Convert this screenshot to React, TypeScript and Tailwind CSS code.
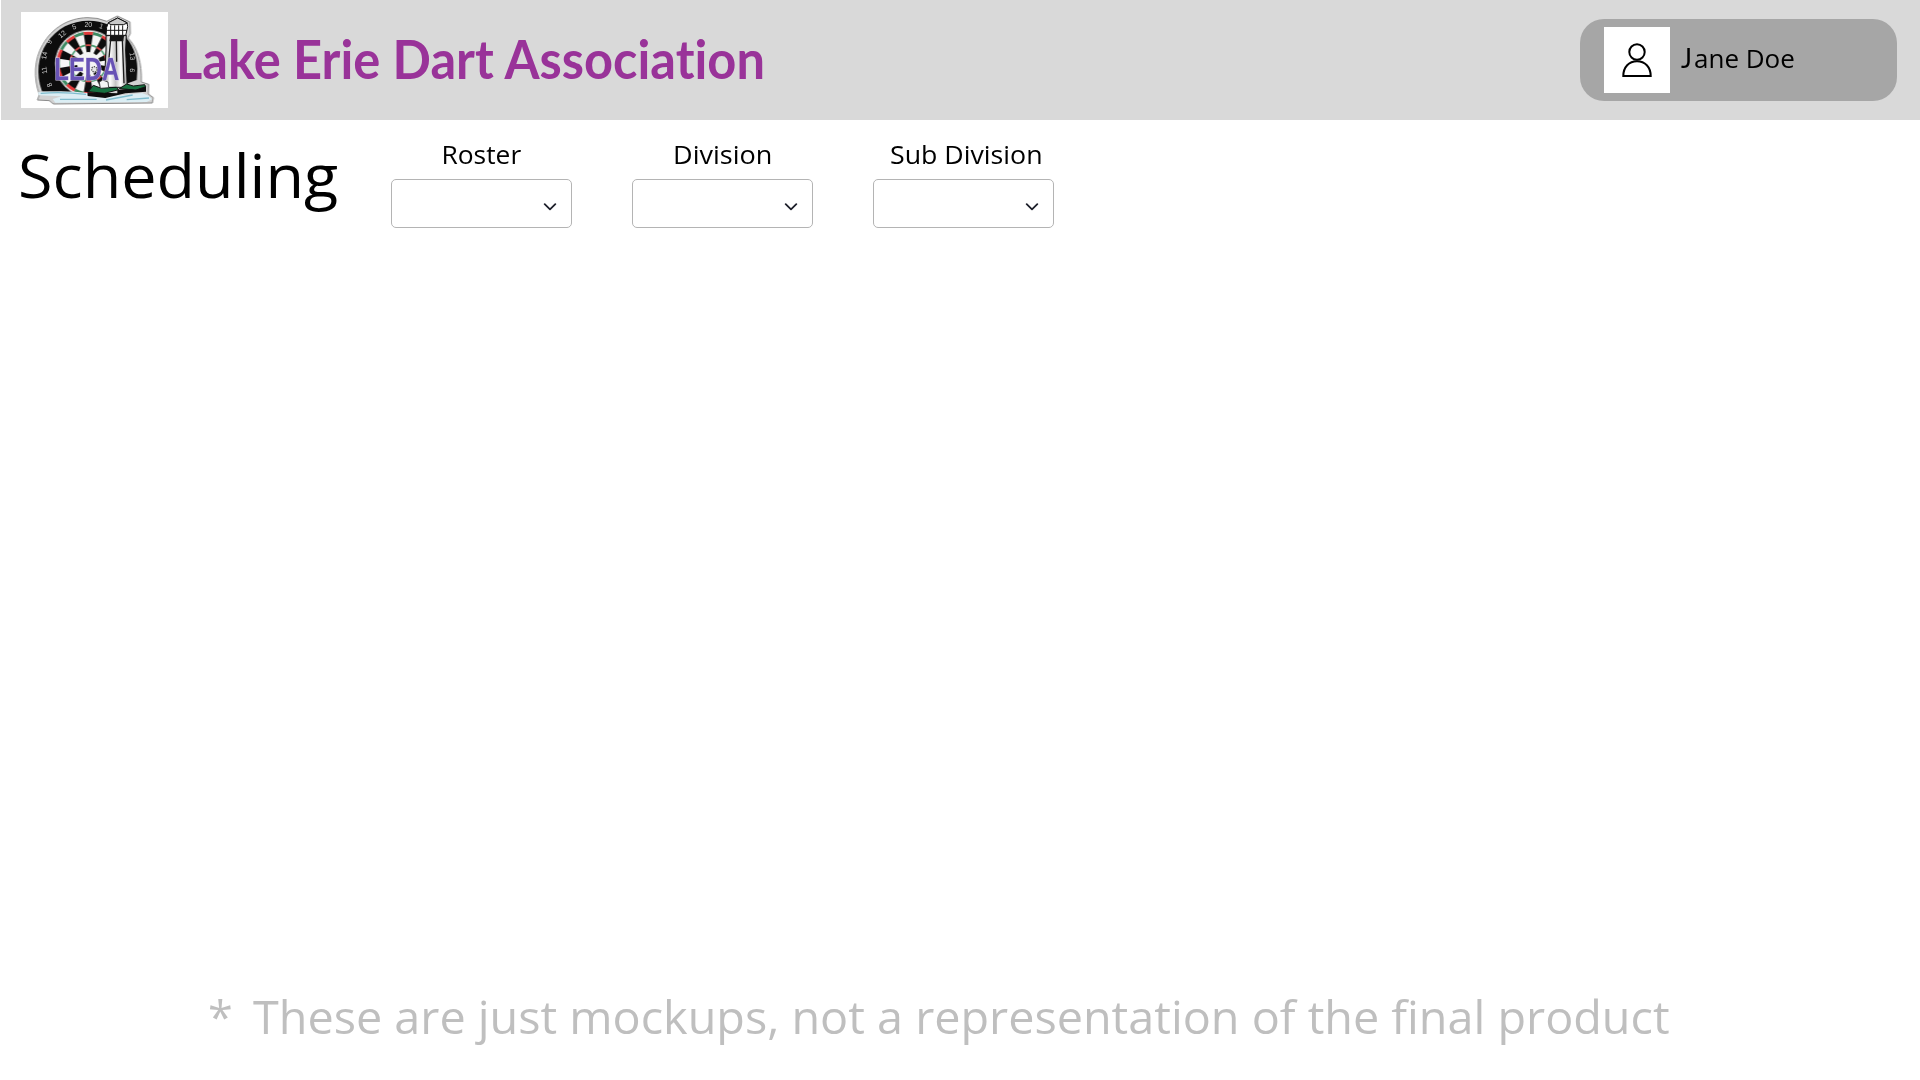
import type { ReactElement } from "react";

const CX = 265;
const CY = 190;

function polar(r: number, deg: number): string {
  const a = (deg * Math.PI) / 180;
  return `${(CX + r * Math.sin(a)).toFixed(1)} ${(CY - r * Math.cos(a)).toFixed(1)}`;
}

function ring(inner: number, outer: number, from: number, to: number): string {
  return `M${polar(outer, from)} A${outer} ${outer} 0 0 1 ${polar(outer, to)} L${polar(inner, to)} A${inner} ${inner} 0 0 0 ${polar(inner, from)} Z`;
}

const NUMBERS: [string, number][] = [
  ["8", -119],
  ["11", -99],
  ["14", -80],
  ["9", -61],
  ["12", -42],
  ["5", -21],
  ["20", 0],
  ["1", 19],
  ["13", 81],
  ["6", 99],
];

function Logo(): ReactElement {
  const sectors = Array.from({ length: 20 }, (_, i) => i * 18);
  return (
    <svg className="h-24 w-[147px] shrink-0 bg-white" viewBox="63 36 441 288" aria-label="LEDA logo">
      <defs>
        <linearGradient id="tower" x1="0" x2="1">
          <stop offset="0" stopColor="#8a8a8a" />
          <stop offset="0.25" stopColor="#ffffff" />
          <stop offset="0.5" stopColor="#c4c4c4" />
          <stop offset="0.72" stopColor="#ffffff" />
          <stop offset="1" stopColor="#999999" />
        </linearGradient>
        <filter id="soft">
          <feGaussianBlur stdDeviation="1.7" />
        </filter>
      </defs>
      <g filter="url(#soft)">
        <path
          d="M118 284 C100 235 102 178 128 134 C156 84 205 54 262 53 Q293 52 320 64 L352 48 L390 66 L391 101 L384 114 C413 143 426 190 424 246 L446 253 L445 282 L460 293 L457 309 L160 312 L148 302 L112 300 Z"
          fill="#d2d2d2"
          stroke="#8b8b8b"
          strokeWidth="3"
        />
        <path
          d="M126 274 C107 222 114 168 140 130 C169 84 216 62 266 62 C350 62 412 126 412 206 L410 240 L300 280 Z"
          fill="#090909"
        />
        <circle cx={CX} cy={CY} r="98" fill="#f5f5f5" />
        {sectors.map((a, i) => (
          <g key={a}>
            {i % 2 === 0 && <path d={ring(34, 88, a - 9, a + 9)} fill="#101010" />}
            <path d={ring(86, 95, a - 9, a + 9)} fill={i % 2 === 0 ? "#e23a3a" : "#3c8a62"} />
            <path d={ring(52, 57, a - 9, a + 9)} fill={i % 2 === 0 ? "#d84848" : "#4a9c70"} />
          </g>
        ))}
        <circle cx={CX} cy={CY} r="99" fill="none" stroke="#dadada" strokeWidth="2" />
        {NUMBERS.map(([label, a]) => {
          const [x, y] = polar(a > 60 || a < -60 ? 134 : 118, a).split(" ").map(Number);
          return (
            <text
              key={label}
              x={x}
              y={y}
              fill="#cfcfcf"
              fontSize="21"
              fontFamily="Liberation Sans, sans-serif"
              textAnchor="middle"
              dominantBaseline="central"
              transform={`rotate(${a} ${x} ${y})`}
            >
              {label}
            </text>
          );
        })}
        <path d="M318 106 L379 106 L377 150 L382 262 L312 262 L318 150 Z" fill="url(#tower)" stroke="#161616" strokeWidth="3" />
        <path d="M330 108 L372 108 L370 124 L328 124 Z" fill="#161616" />
        <path d="M332 118 L326 185 M349 118 L350 185 M367 118 L372 250" stroke="#1b1b1b" strokeWidth="4" fill="none" />
        <path d="M320 82 L325 68 L353 54 L381 68 L383 80 L377 107 L318 107 Z" fill="#ffffff" stroke="#111111" strokeWidth="3" />
        <path d="M324 69 L353 54 L382 69 L370 74 L333 74 Z" fill="#c9c9c9" stroke="#111111" strokeWidth="3" />
        <path d="M316 91 H381 M318 106 H378 M332 76 V106 M344 76 V106 M356 76 V106 M368 76 V106" stroke="#1a1a1a" strokeWidth="3" />
        <path d="M114 277 Q195 270 264 279 L320 290 L426 279 L446 287 L456 298 L440 306 L166 308 L158 297 L185 289 L116 286 Z" fill="#dceef4" />
        <path d="M122 280 Q190 275 258 283 M180 298 H290 M318 300 L398 285 M380 299 L447 294" stroke="#7fbccd" strokeWidth="4" fill="none" />
        <path d="M262 277 L352 280 L352 270 L438 260 L438 275 L376 280 L316 294 L263 288 Z" fill="#0a0a0a" />
        <path d="M265 275 L280 256 L302 264 L350 262 L356 269 L314 280 Z" fill="#17713f" stroke="#111111" strokeWidth="3" />
        <path d="M358 266 L380 252 L400 258 L434 254 L437 260 L408 270 Z" fill="#17713f" stroke="#111111" strokeWidth="3" />
        <path d="M298 246 L308 240 L324 246 L326 263 L301 265 Z" fill="#f5f5f5" stroke="#333333" strokeWidth="2.5" />
        <text
          x="163"
          y="240"
          fontSize="93"
          fontWeight="700"
          fontFamily="Liberation Sans, sans-serif"
          textLength="195"
          lengthAdjust="spacingAndGlyphs"
          fill="#6852b5"
          stroke="#cfc8e6"
          strokeWidth="3"
          paintOrder="stroke"
        >
          LEDA
        </text>
        <circle cx="283" cy="208" r="8" fill="#e7e7e7" stroke="#555555" strokeWidth="4" strokeDasharray="4 3" />
      </g>
    </svg>
  );
}

function UserIcon(): ReactElement {
  return (
    <svg className="size-[66px]" viewBox="0 0 66 66" fill="none" stroke="#000" strokeWidth="2">
      <circle cx="33" cy="25" r="7.7" />
      <path d="M19.3 49 C19.3 40 25 34.2 33 34.2 C41 34.2 46.7 40 46.7 49 Z" />
    </svg>
  );
}

function Filter({ label, className }: { label: string; className: string }): ReactElement {
  return (
    <div className="flex w-[181px] flex-col items-center gap-[9px]">
      <span className={`text-[26px] leading-8 whitespace-nowrap ${className}`}>{label}</span>
      <button
        type="button"
        aria-label={label}
        className="flex h-[49px] w-full items-center justify-end rounded-[5px] border border-[#b4b4b4] bg-white pt-[6px] pr-[14px]"
      >
        <svg className="h-2 w-[14px]" viewBox="0 0 14 8" fill="none" stroke="#1d1f2a" strokeWidth="1.8" strokeLinecap="round" strokeLinejoin="round">
          <path d="M1.7 1.2 L7 6.4 L12.3 1.2" />
        </svg>
      </button>
    </div>
  );
}

export default function App(): ReactElement {
  return (
    <div className="flex h-screen flex-col overflow-hidden bg-white font-['Open_Sans',sans-serif] text-black">
      <header className="ml-px flex h-[120px] shrink-0 items-center bg-[#d9d9d9] pr-[23px] pl-5">
        <Logo />
        <h1 className="ml-2 w-[600px] origin-left scale-x-[0.937] pb-[3px] font-['Lato',sans-serif] text-[54px] leading-[60px] font-bold whitespace-nowrap text-[#993399] [font-variant-ligatures:none]">
          Lake Erie Dart Association
        </h1>
        <div className="ml-auto flex h-[82px] w-[317px] items-center rounded-[24px] bg-[#a6a6a6] pl-6">
          <div className="bg-white">
            <UserIcon />
          </div>
          <span className="ml-[11px] origin-left pb-1 text-[26px] leading-8 whitespace-nowrap">
            <span className="mr-[2px] font-['Lato',sans-serif]">J</span>ane Doe
          </span>
        </div>
      </header>
      <main className="flex flex-1 items-start">
        <h2 className="mt-[25px] w-[391px] pl-[18px] text-[60px] leading-[60px] font-normal">
          <span className="inline-block origin-left scale-x-[1.049]">Scheduling</span>
        </h2>
        <div className="mt-[18px] flex gap-[60px]">
          <Filter label="Roster" className="scale-x-[1.015]" />
          <Filter label="Division" className="scale-x-[1.04]" />
          <Filter label="Sub Division" className="scale-x-[1.028] pl-[5px]" />
        </div>
      </main>
      <footer className="flex h-[93px] shrink-0 items-start pl-[208px] text-[45px] leading-[60px] whitespace-nowrap text-[#bfbfbf]">
        <span className="w-[45px]">*</span>
        <p className="origin-left scale-x-[1.0387] [font-variant-ligatures:none]">
          These are just mockups, not a representation of the final product
        </p>
      </footer>
    </div>
  );
}
